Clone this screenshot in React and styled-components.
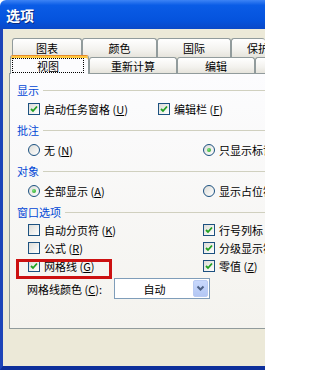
import React from "react";
import styled, { createGlobalStyle } from "styled-components";

const GlobalStyle = createGlobalStyle`
  html, body {
    margin: 0;
    padding: 0;
    overflow: hidden;
  }
  body {
    font-family: "Noto Sans CJK SC", "Liberation Sans", sans-serif;
    font-size: 11px;
    color: #000;
  }
`;

const Window = styled.div`
  width: 265px;
  height: 370px;
  display: flex;
  flex-direction: column;
  overflow: hidden;
`;

const TitleBar = styled.div`
  height: 29px;
  flex-shrink: 0;
  display: flex;
  align-items: center;
  padding-left: 6px;
  background: linear-gradient(#3d83f5 0%, #0a5ce6 18%, #0553dd 70%, #0a48c8 100%);
  border-radius: 6px 0 0 0;
  color: #fff;
  font-size: 14px;
  font-weight: bold;
  text-shadow: 1px 1px 0 #0a2a80;
`;

const Frame = styled.div`
  height: 341px;
  flex-shrink: 0;
  box-sizing: border-box;
  background: #ece9d8;
  border-left: 3px solid #1d44b8;
  border-bottom: 4px solid #0d2f9a;
  padding: 9px 0 0 6px;
  display: flex;
  flex-direction: column;
  overflow: hidden;
`;

const TabRow = styled.div`
  display: flex;
  align-items: flex-end;
  height: ${(p) => p.h}px;
  flex-shrink: 0;
  padding-left: ${(p) => p.indent}px;
  white-space: nowrap;
`;

const Tab = styled.div`
  width: ${(p) => p.w}px;
  height: 100%;
  flex-shrink: ${(p) => (p.last ? 1 : 0)};
  min-width: 0;
  overflow: hidden;
  box-sizing: border-box;
  display: flex;
  align-items: center;
  justify-content: ${(p) => (p.last ? "flex-start" : "center")};
  padding-left: ${(p) => (p.last ? 15 : 0)}px;
  border: 1px solid #919b9c;
  border-bottom: none;
  border-right: ${(p) => (p.last ? "none" : "1px solid #919b9c")};
  border-radius: 3px 3px 0 0;
  background: linear-gradient(#ffffff, #f3f2ee 60%, #e6e4dc);
  font-size: 11px;
`;

const ActiveTab = styled(Tab)`
  height: 19px;
  margin-bottom: -1px;
  position: relative;
  z-index: 2;
  align-items: flex-start;
  justify-content: flex-start;
  background: #fcfcfe;
  border-top: 1px solid #e68b2c;
  box-shadow: inset 0 2px 0 #ffc83c;
`;

const FocusRing = styled.span`
  margin: 2px 0 0 1px;
  width: 72px;
  height: 15px;
  box-sizing: border-box;
  border: 1px dotted #000;
  display: flex;
  align-items: center;
  justify-content: center;
`;

const Panel = styled.div`
  height: 256px;
  flex-shrink: 0;
  box-sizing: border-box;
  border: 1px solid #919b9c;
  border-right: none;
  background: linear-gradient(#fcfcfe, #f4f3ee);
  padding: 7px 0 0 7px;
  display: flex;
  flex-direction: column;
  overflow: hidden;
`;

const Section = styled.div`
  display: flex;
  flex-direction: column;
  flex-shrink: 0;
  margin-top: ${(p) => p.gap || 0}px;
`;

const SectionTitle = styled.div`
  height: 18px;
  display: flex;
  align-items: center;
  gap: 4px;
  color: #0046d5;
  white-space: nowrap;

  &::after {
    content: "";
    flex: 1;
    height: 1px;
    background: #d0d0bf;
  }
`;

const Row = styled.div`
  height: ${(p) => p.h}px;
  display: grid;
  grid-template-columns: ${(p) => p.split}px minmax(0, 1fr);
  align-items: center;
  padding-left: 11px;
  white-space: nowrap;
`;

const Item = styled.label`
  position: relative;
  display: flex;
  align-items: center;
  gap: 4px;
  min-width: 0;
  white-space: nowrap;
`;

const ClipItem = styled(Item)`
  overflow: hidden;
`;

const Box = styled.span`
  width: 12px;
  height: 12px;
  flex-shrink: 0;
  box-sizing: border-box;
  border: 1px solid #1c5180;
  background: linear-gradient(135deg, #dcdcd7, #ffffff);
  display: flex;
  align-items: center;
  justify-content: center;
`;

const Radio = styled.span`
  width: 12px;
  height: 12px;
  flex-shrink: 0;
  box-sizing: border-box;
  border: 1px solid #1c5180;
  border-radius: 50%;
  background: linear-gradient(135deg, #dcdcd7, #ffffff);
  display: flex;
  align-items: center;
  justify-content: center;

  &::after {
    content: "";
    display: ${(p) => (p.on ? "block" : "none")};
    width: 4px;
    height: 4px;
    border-radius: 50%;
    background: radial-gradient(circle at 35% 35%, #7be07a, #21a121);
  }
`;

/* red annotation drawn over the 网格线 option */
const Highlight = styled.span`
  position: absolute;
  left: -12px;
  top: 1px;
  width: 96px;
  height: 20px;
  box-sizing: border-box;
  border: 3px solid #cc1111;
  pointer-events: none;
`;

const ColorRow = styled.div`
  margin-top: 3px;
  padding-left: 10px;
  display: flex;
  align-items: center;
  white-space: nowrap;
`;

const ColorLabel = styled.span`
  width: 87px;
  flex-shrink: 0;
`;

const Select = styled.div`
  width: 96px;
  height: 21px;
  flex-shrink: 0;
  box-sizing: border-box;
  border: 1px solid #7f9db9;
  background: #fff;
  display: flex;
  align-items: stretch;
  padding: 1px;
`;

const SelectText = styled.span`
  flex: 1;
  display: flex;
  align-items: center;
  justify-content: center;
`;

const DropButton = styled.span`
  width: 15px;
  border-radius: 2px;
  background: linear-gradient(#c8d8fc, #b3c7f4);
  border: 1px solid #b9cbf3;
  box-sizing: border-box;
  display: flex;
  align-items: center;
  justify-content: center;
`;

const Check = () => (
  <svg width="8" height="8" viewBox="0 0 8 8">
    <polyline points="1,4 3,6 7,1.5" fill="none" stroke="#21a121" strokeWidth="1.8" />
  </svg>
);

const Key = ({ k }) => (
  <>
    {" ("}
    <u>{k}</u>
    {")"}
  </>
);

const CheckItem = ({ on, text, k, clip, children }) => {
  const Wrap = clip ? ClipItem : Item;
  return (
    <Wrap>
      <Box>{on && <Check />}</Box>
      <span>
        {text}
        {k && <Key k={k} />}
      </span>
      {children}
    </Wrap>
  );
};

const RadioItem = ({ on, text, k, clip }) => {
  const Wrap = clip ? ClipItem : Item;
  return (
    <Wrap>
      <Radio on={on} />
      <span>
        {text}
        {k && <Key k={k} />}
      </span>
    </Wrap>
  );
};

export default function App() {
  return (
    <>
      <GlobalStyle />
      <Window>
        <TitleBar>选项</TitleBar>
        <Frame>
          <TabRow h={19} indent={3}>
            <Tab w={70}>图表</Tab>
            <Tab w={75}>颜色</Tab>
            <Tab w={74}>国际</Tab>
            <Tab w={70} last>
              保护
            </Tab>
          </TabRow>
          <TabRow h={16} indent={1}>
            <ActiveTab w={79}>
              <FocusRing>视图</FocusRing>
            </ActiveTab>
            <Tab w={88}>重新计算</Tab>
            <Tab w={78}>编辑</Tab>
            <Tab w={70} last>
              常规
            </Tab>
          </TabRow>
          <Panel>
            <Section>
              <SectionTitle>显示</SectionTitle>
              <Row h={19} split={130}>
                <CheckItem on text="启动任务窗格" k="U" />
                <CheckItem on text="编辑栏" k="F" clip />
              </Row>
            </Section>
            <Section gap={3}>
              <SectionTitle>批注</SectionTitle>
              <Row h={21} split={175}>
                <RadioItem text="无" k="N" />
                <RadioItem on text="只显示标识符" clip />
              </Row>
            </Section>
            <Section gap={2}>
              <SectionTitle>对象</SectionTitle>
              <Row h={21} split={175}>
                <RadioItem on text="全部显示" k="A" />
                <RadioItem text="显示占位符" k="P" clip />
              </Row>
            </Section>
            <Section gap={2}>
              <SectionTitle>窗口选项</SectionTitle>
              <Row h={18} split={175}>
                <CheckItem text="自动分页符" k="K" />
                <CheckItem on text="行号列标" k="H" clip />
              </Row>
              <Row h={18} split={175}>
                <CheckItem text="公式" k="R" />
                <CheckItem on text="分级显示符号" k="O" clip />
              </Row>
              <Row h={18} split={175}>
                <CheckItem on text="网格线" k="G">
                  <Highlight />
                </CheckItem>
                <CheckItem on text="零值" k="Z" clip />
              </Row>
              <ColorRow>
                <ColorLabel>
                  网格线颜色 (<u>C</u>):
                </ColorLabel>
                <Select>
                  <SelectText>自动</SelectText>
                  <DropButton>
                    <svg width="9" height="7" viewBox="0 0 9 7">
                      <polyline points="1.5,1.5 4.5,4.5 7.5,1.5" fill="none" stroke="#4d6185" strokeWidth="2" />
                    </svg>
                  </DropButton>
                </Select>
              </ColorRow>
            </Section>
          </Panel>
        </Frame>
      </Window>
    </>
  );
}
